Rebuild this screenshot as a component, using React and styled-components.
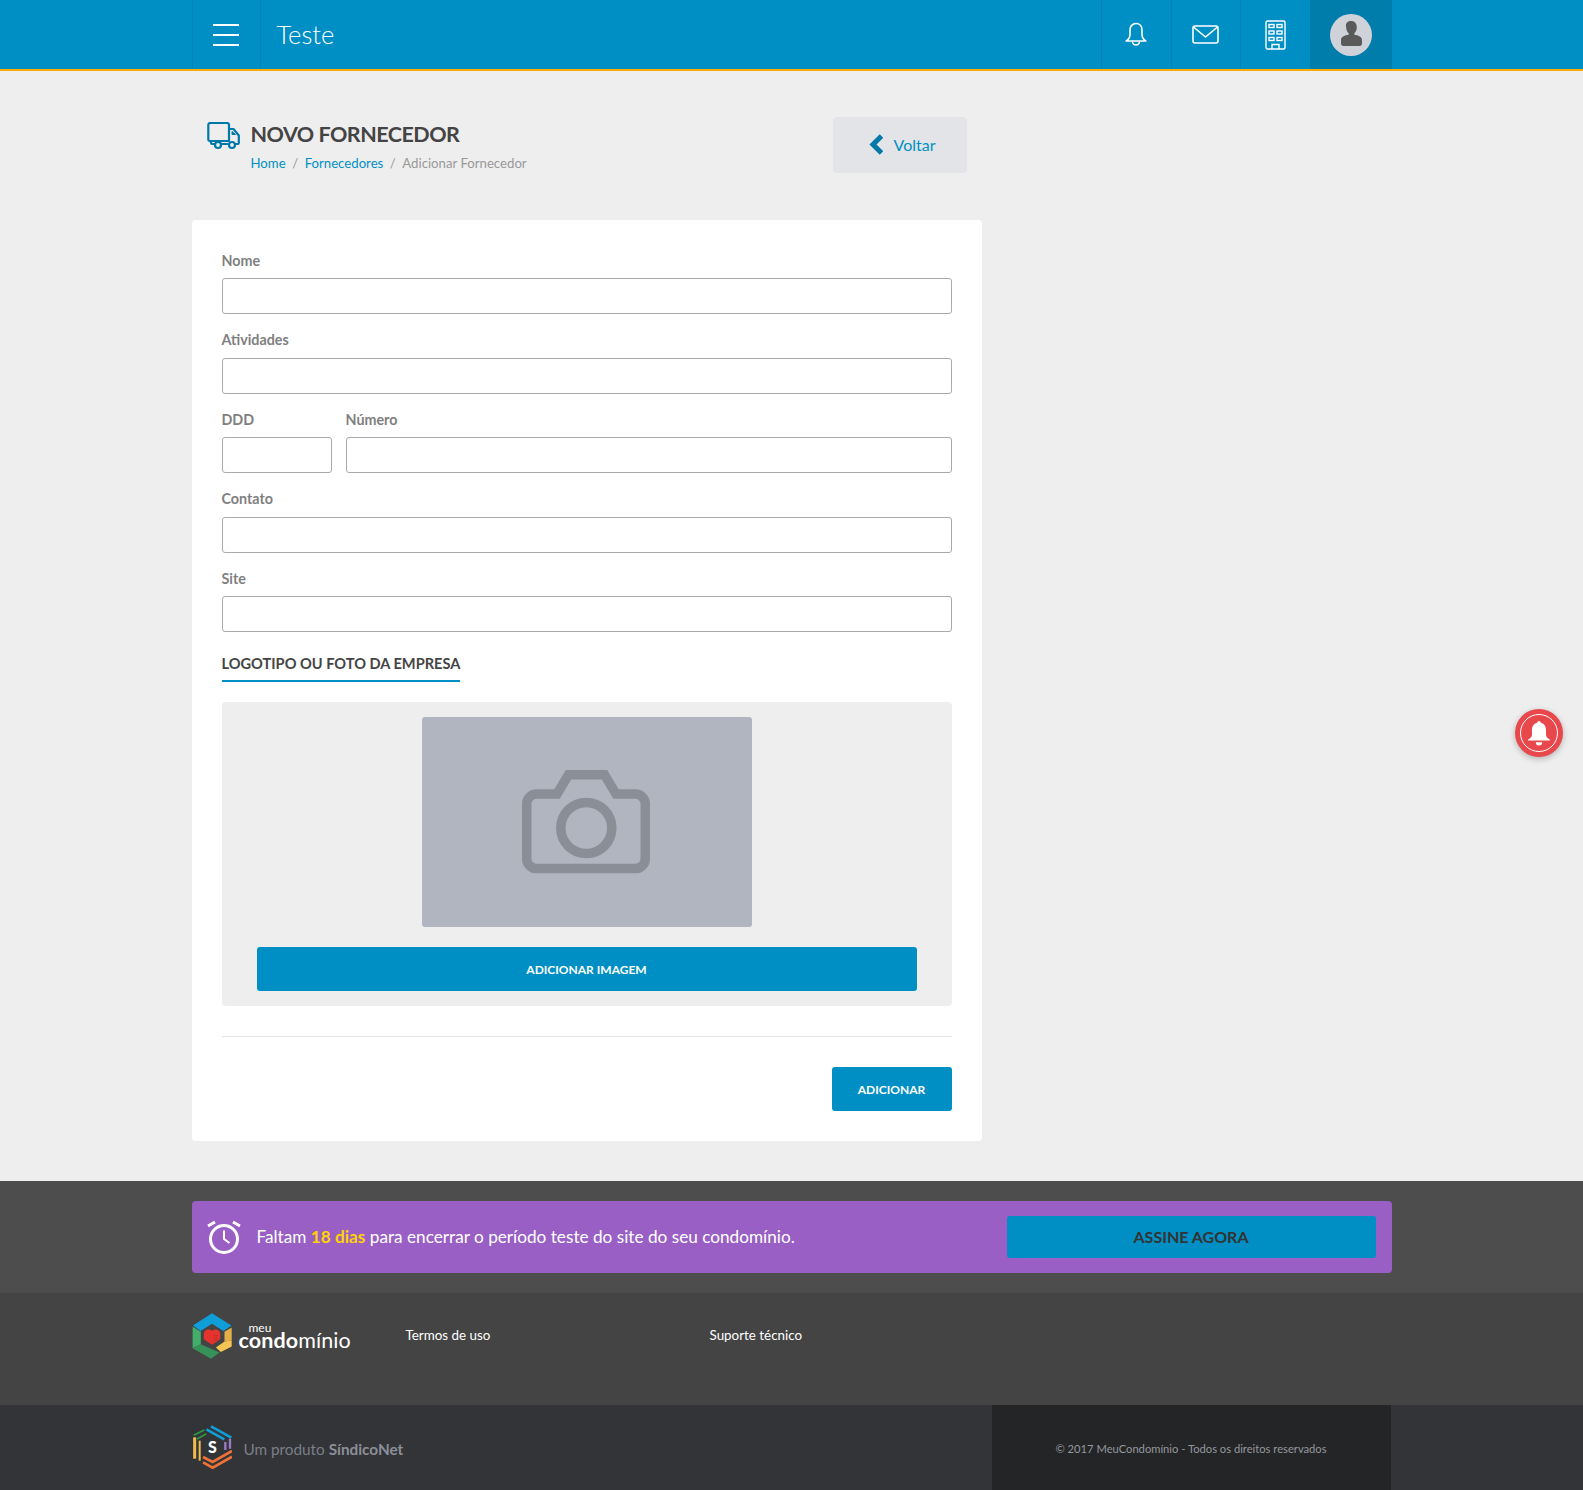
import styled, { createGlobalStyle } from 'styled-components';

const GlobalStyle = createGlobalStyle`
  * {
    box-sizing: border-box;
  }

  html, body {
    margin: 0;
    padding: 0;
    background: #eeeeee;
    font-family: Lato, "Noto Sans", sans-serif;
  }
`;

const Container = styled.div`
  width: 1200px;
  margin: 0 auto;
  display: flex;
`;

const Header = styled.header`
  height: 71px;
  background: #008fc4;
  border-bottom: 2px solid #ffab00;
`;

const HeaderBar = styled(Container)`
  height: 69px;
  align-items: stretch;
`;

const MenuCell = styled.div`
  width: 69px;
  border-left: 1px solid #0083b5;
  border-right: 1px solid #0083b5;
  display: flex;
  flex-direction: column;
  justify-content: center;
  gap: 8px;
  padding-left: 20px;

  span {
    display: block;
    width: 26px;
    height: 2px;
    background: #fff;
  }
`;

const Brand = styled.div`
  flex: 1;
  padding-left: 16px;
  line-height: 69px;
  font-size: 25.5px;
  font-weight: 300;
  color: #fff;
`;

const IconCell = styled.div`
  width: 69.5px;
  border-left: 1px solid #0083b5;
  display: flex;
  align-items: center;
  justify-content: center;
`;

const AvatarCell = styled.div`
  width: 82px;
  background: #007dab;
  display: flex;
  align-items: center;
  justify-content: center;
`;

const Main = styled.main`
  padding-bottom: 40px;
`;

const Content = styled.div`
  width: 1200px;
  margin: 0 auto;
`;

const Column = styled.div`
  width: 790px;
`;

const PageHead = styled.div`
  height: 149px;
  padding: 46px 15px 0;
  display: flex;
  justify-content: space-between;
  align-items: flex-start;
`;

const TitleGroup = styled.div`
  display: flex;
  gap: 10px;
  padding-top: 5px;
`;

const PageTitle = styled.h1`
  margin: 0;
  font-size: 21.5px;
  line-height: 24px;
  font-weight: 700;
  color: #444;
  letter-spacing: -0.5px;
`;

const Breadcrumb = styled.div`
  margin-top: 8px;
  font-size: 13.2px;
  line-height: 18px;
  color: #999;
  display: flex;
  gap: 6.5px;

  a {
    color: #0090c5;
    text-decoration: none;
  }
`;

const BackButton = styled.button`
  width: 134px;
  height: 56px;
  padding: 0 0 2px 5px;
  background: #e2e4e8;
  border: none;
  border-radius: 4px;
  display: flex;
  align-items: center;
  justify-content: center;
  gap: 11px;
  font: 400 16px Lato, sans-serif;
  color: #0090c5;
`;

const Card = styled.section`
  background: #fff;
  border-radius: 4px;
  padding: 34.5px 30px 30px;
`;

const Field = styled.div`
  flex: ${(p) => (p.$fixed ? `0 0 ${p.$fixed}px` : '1')};
  margin-bottom: 20px;
`;

const Label = styled.label`
  display: block;
  height: 23.5px;
  font-size: 14.3px;
  line-height: 12px;
  font-weight: 700;
  color: #808080;
`;

const Input = styled.input`
  display: block;
  width: 100%;
  height: 36px;
  border: 1px solid #aaa;
  border-radius: 3px;
  background: #fff;
`;

const FieldRow = styled.div`
  display: flex;
  gap: 14px;
`;

const SectionTitle = styled.h2`
  display: table;
  margin: 0;
  height: 30px;
  font-size: 14.6px;
  line-height: 24px;
  font-weight: 700;
  color: #444;
  border-bottom: 2px solid #008fc4;
`;

const UploadBox = styled.div`
  margin-top: 20px;
  padding: 15px 35px;
  background: #eeeeee;
  border-radius: 4px;
  display: flex;
  flex-direction: column;
  align-items: center;
`;

const Photo = styled.div`
  width: 330px;
  height: 210px;
  margin-bottom: 20px;
  padding: 0 2px 0 0;
  background: #b1b5c0;
  border-radius: 3px;
  display: flex;
  align-items: center;
  justify-content: center;
`;

const PrimaryButton = styled.button`
  width: ${(p) => p.$width};
  height: 44px;
  background: #008fc4;
  border: none;
  border-radius: 3px;
  font: 700 12px Lato, sans-serif;
  color: #fff;
`;

const Divider = styled.hr`
  margin: 30px 0;
  border: none;
  border-top: 1px solid #e2e2e2;
`;

const Actions = styled.div`
  display: flex;
  justify-content: flex-end;
`;

const TrialStrip = styled.div`
  height: 112px;
  padding-top: 20px;
  background: #4d4d4d;
`;

const TrialBanner = styled.div`
  width: 1200px;
  height: 72px;
  margin: 0 auto;
  padding: 0 16px 0 15px;
  background: #995fc4;
  border-radius: 4px;
  display: flex;
  align-items: center;
  gap: 16px;
  font-size: 17.2px;
  color: #fff;

  b {
    color: #ffd400;
  }
`;

const TrialText = styled.div`
  flex: 1;
  padding-bottom: 2px;
`;

const SubscribeButton = styled.button`
  width: 369px;
  height: 42px;
  padding: 0 0 2px;
  background: #008fc4;
  border: none;
  border-radius: 3px;
  font: 700 16px Lato, sans-serif;
  color: #333;
`;

const FooterLinks = styled.div`
  height: 112px;
  padding-top: 20px;
  background: #444444;
`;

const Logo = styled.div`
  width: 214px;
  display: flex;
  gap: 7px;
`;

const LogoWord = styled.div`
  color: #fff;
  font-family: Lato, sans-serif;

  small {
    display: block;
    font-size: 12px;
    line-height: 11px;
    margin-top: 9px;
    margin-left: 10px;
  }

  span {
    display: block;
    font-size: 21.5px;
    line-height: 15px;
    font-weight: 400;
    letter-spacing: 0.1px;
  }

  b {
    font-weight: 700;
  }
`;

const FooterLink = styled.a`
  width: ${(p) => p.$width || 'auto'};
  padding-top: 14px;
  font-size: 13.4px;
  line-height: 16px;
  color: #fff;
`;

const FooterBottom = styled.div`
  height: 85px;
  background: #333437;
`;

const BottomBar = styled(Container)`
  height: 85px;
  align-items: center;
`;

const Product = styled.div`
  flex: 1;
  display: flex;
  align-items: center;
  gap: 12px;
  font-size: 15.3px;
  color: #7a7f88;

  span {
    padding-top: 2px;
  }

  b {
    color: #8b8f97;
  }
`;

const Copyright = styled.div`
  width: 399px;
  height: 85px;
  margin-right: 1px;
  padding-top: 2px;
  background: #242527;
  display: flex;
  align-items: center;
  justify-content: center;
  font-size: 11.2px;
  color: #94979d;
`;

const NotifyBadge = styled.div`
  position: absolute;
  left: 1515px;
  top: 709px;
  width: 48px;
  height: 48px;
  border-radius: 50%;
  background: #e8474b;
  box-shadow: 0 2px 6px rgba(0, 0, 0, 0.25);
  display: flex;
  align-items: center;
  justify-content: center;
`;

const BadgeRing = styled.div`
  width: 38px;
  height: 38px;
  border: 1.5px solid #fff;
  border-radius: 50%;
  display: flex;
  align-items: center;
  justify-content: center;
`;

const TruckIcon = () => (
  <svg width="34" height="28" viewBox="0 0 34 28" fill="none" stroke="#0079a8" strokeWidth="2.2" strokeLinejoin="round">
    <path d="M4 19H2.5a1.5 1.5 0 0 1-1.2-1.5V3A2 2 0 0 1 3.300 1H20a2 2 0 0 1 2 2v16H4" />
    <path d="M22 7h4.500l5.300 6.500V21a1 1 0 0 1-1 1H28" />
    <path d="M4 19v2a1 1 0 0 0 1 1h3M14 22h8" />
    <circle cx="11" cy="23" r="3" />
    <circle cx="25" cy="23" r="3" />
    <path d="M25 9.500v3h3.500z" fill="#0079a8" strokeWidth="1" />
  </svg>
);

const BellIcon = () => (
  <svg width="22" height="25" viewBox="0 0 22 25" fill="none" stroke="#fff" strokeWidth="1.6" strokeLinejoin="round">
    <path d="M11 1.500c-3.600 0-6 2.800-6 6.500v4.500c0 3.200-1.600 5-3.800 6.500h19.600c-2.200-1.500-3.800-3.300-3.800-6.500V8c0-3.700-2.400-6.500-6-6.500z" />
    <path d="M7.500 19.500a3.500 3.500 0 0 0 7 0" />
  </svg>
);

const MailIcon = () => (
  <svg width="27" height="19" viewBox="0 0 27 19" fill="none" stroke="#fff" strokeWidth="1.6" strokeLinejoin="round">
    <rect x="1" y="1" width="25" height="17" rx="2" />
    <path d="M1.500 2l12 10 12-10" />
  </svg>
);

const BuildingIcon = () => (
  <svg width="21" height="30" viewBox="0 0 21 30" fill="none" stroke="#fff" strokeWidth="1.4">
    <rect x="1" y="1" width="19" height="28" rx="1.5" />
    <rect x="4" y="4.500" width="5" height="3" />
    <rect x="12" y="4.500" width="5" height="3" />
    <rect x="4" y="11" width="5" height="3" />
    <rect x="12" y="11" width="5" height="3" />
    <rect x="4" y="17.500" width="5" height="3" />
    <rect x="12" y="17.500" width="5" height="3" />
    <path d="M7 29v-4.500h7V29" />
  </svg>
);

const AvatarIcon = () => (
  <svg width="42" height="42" viewBox="0 0 42 42">
    <circle cx="21" cy="21" r="21" fill="#d0d2da" />
    <path d="M21 7c3.800 0 5.800 2.700 5.800 6.200 0 2.600-1 4.900-2.600 6.200v1.200c3.800 1 7.800 2 7.800 5.400v3.400c0 1.400-1 2.600-2.800 2.600H14c-2 0-3-1.200-3-2.600v-3.400c0-3.400 4-4.400 7.800-5.400v-1.200c-1.600-1.300-2.600-3.600-2.600-6.200C15.200 9.700 17.200 7 21 7z" fill="#5a5a5a" />
  </svg>
);

const ChevronLeft = () => (
  <svg width="14" height="21" viewBox="0 0 14 21" fill="none" stroke="#0079a8" strokeWidth="5">
    <path d="M12.500 2L4 10.500l8.500 8.500" />
  </svg>
);

const CameraIcon = () => (
  <svg width="128" height="104" viewBox="0 0 128 104" fill="none" stroke="#8a8e96" strokeWidth="9.500">
    <path d="M35 24L46.500 4.700h36L94 24h19a10 10 0 0 1 10.300 10v54.600a10 10 0 0 1-10.300 10H15a10 10 0 0 1-10.300-10V34A10 10 0 0 1 15 24z" />
    <circle cx="64.300" cy="58" r="25.500" />
  </svg>
);

const AlarmIcon = () => (
  <svg width="34" height="34" viewBox="0 0 34 34" fill="none" stroke="#fff" strokeWidth="3">
    <circle cx="17" cy="19" r="13.500" />
    <path d="M17 10.500V19l5.500 4" strokeWidth="2" />
    <path d="M1 6l7-4M33 6l-7-4" />
  </svg>
);

const CondoLogo = () => (
  <svg width="40" height="46" viewBox="35 68 120 140">
    <path d="M37 106L95 69l59 37-24 17-35-22-35 22z" fill="#0f9ed8" />
    <path d="M36 110l25 15v38l-25 12z" fill="#43ad6b" />
    <path d="M36 175l25-12 57 25-26 19z" fill="#37925a" />
    <path d="M155 112v40l-22 3v-30z" fill="#e2b049" />
    <path d="M155 152v18l-33 17-15-14 26-18z" fill="#f4c552" />
    <path d="M95 122c8-8 25-4 25 10v16l-25 17-25-17v-16c0-14 17-18 25-10z" fill="#e5342e" />
    <path d="M100 137h14M100 144h14M100 151h10" stroke="#b92a26" strokeWidth="3" strokeDasharray="4 2" />
  </svg>
);

const SindicoLogo = () => (
  <svg width="40" height="46" viewBox="35 405 120 138" fill="none">
    <path d="M92 409l61 34M78 418l54 30" stroke="#0f9ed8" strokeWidth="8" />
    <path d="M40 436l32-16M50 447l28-16" stroke="#2e9a45" strokeWidth="5" />
    <path d="M43 442v64" stroke="#f1bd4c" strokeWidth="9" />
    <path d="M58 452v60" stroke="#f1bd4c" strokeWidth="6" />
    <path d="M135 456v24M149 446v30" stroke="#9a7cc4" strokeWidth="7" />
    <path d="M68 501l29 15 58-33M68 517l29 16 58-33" stroke="#ee7237" strokeWidth="8" />
    <text x="96" y="490" fontFamily="Lato, sans-serif" fontWeight="900" fontSize="48" fill="#fff" textAnchor="middle">S</text>
  </svg>
);

const NotifyBell = () => (
  <svg width="26" height="26" viewBox="0 0 24 24" fill="#fff">
    <path d="M12 1c-1 0-1.600.7-1.700 1.500C7 3.300 5.500 6 5.500 9.500v4c0 2-1.300 3-3.500 4.500v1h20v-1c-2.200-1.500-3.500-2.500-3.500-4.500v-4c0-3.500-1.500-6.200-4.800-7C13.600 1.700 13 1 12 1z" />
    <path d="M9 20.500h6a3 3 0 0 1-6 0z" />
  </svg>
);

const FormField = ({ label, fixed }) => (
  <Field $fixed={fixed}>
    <Label>{label}</Label>
    <Input />
  </Field>
);

const App = () => {
  return (
    <>
      <GlobalStyle />
      <Header>
        <HeaderBar>
          <MenuCell>
            <span />
            <span />
            <span />
          </MenuCell>
          <Brand>Teste</Brand>
          <IconCell><BellIcon /></IconCell>
          <IconCell><MailIcon /></IconCell>
          <IconCell><BuildingIcon /></IconCell>
          <AvatarCell><AvatarIcon /></AvatarCell>
        </HeaderBar>
      </Header>
      <Main>
        <Content>
          <Column>
            <PageHead>
              <TitleGroup>
                <TruckIcon />
                <div>
                  <PageTitle>NOVO FORNECEDOR</PageTitle>
                  <Breadcrumb>
                    <a>Home</a>
                    <span>/</span>
                    <a>Fornecedores</a>
                    <span>/</span>
                    <span>Adicionar Fornecedor</span>
                  </Breadcrumb>
                </div>
              </TitleGroup>
              <BackButton>
                <ChevronLeft />
                Voltar
              </BackButton>
            </PageHead>
            <Card>
              <FormField label="Nome" />
              <FormField label="Atividades" />
              <FieldRow>
                <FormField label="DDD" fixed={110} />
                <FormField label="Número" />
              </FieldRow>
              <FormField label="Contato" />
              <FormField label="Site" />
              <SectionTitle>LOGOTIPO OU FOTO DA EMPRESA</SectionTitle>
              <UploadBox>
                <Photo><CameraIcon /></Photo>
                <PrimaryButton $width="660px">ADICIONAR IMAGEM</PrimaryButton>
              </UploadBox>
              <Divider />
              <Actions>
                <PrimaryButton $width="120px">ADICIONAR</PrimaryButton>
              </Actions>
            </Card>
          </Column>
        </Content>
      </Main>
      <TrialStrip>
        <TrialBanner>
          <AlarmIcon />
          <TrialText>Faltam <b>18 dias</b> para encerrar o período teste do site do seu condomínio.</TrialText>
          <SubscribeButton>ASSINE AGORA</SubscribeButton>
        </TrialBanner>
      </TrialStrip>
      <FooterLinks>
        <Container>
          <Logo>
            <CondoLogo />
            <LogoWord>
              <small>meu</small>
              <span><b>condo</b>mínio</span>
            </LogoWord>
          </Logo>
          <FooterLink $width="304px">Termos de uso</FooterLink>
          <FooterLink>Suporte técnico</FooterLink>
        </Container>
      </FooterLinks>
      <FooterBottom>
        <BottomBar>
          <Product>
            <SindicoLogo />
            <span>Um produto <b>SíndicoNet</b></span>
          </Product>
          <Copyright>© 2017 MeuCondomínio - Todos os direitos reservados</Copyright>
        </BottomBar>
      </FooterBottom>
      <NotifyBadge>
        <BadgeRing><NotifyBell /></BadgeRing>
      </NotifyBadge>
    </>
  );
};

export default App;
